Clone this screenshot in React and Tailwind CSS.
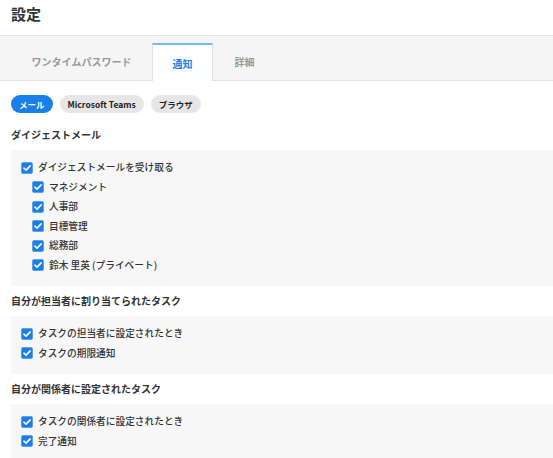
import React, { useState } from "react";

const font = { fontFamily: '"Noto Sans CJK JP", "Noto Sans", sans-serif' };

const Check = ({ checked, onChange }) => (
  <button
    onClick={onChange}
    className={`flex items-center justify-center w-[12px] h-[12px] rounded-[2px] border shrink-0 ${
      checked ? "bg-[#1a7fe6] border-[#5aa2ee]" : "bg-white border-[#999]"
    }`}
  >
    {checked && (
      <svg viewBox="0 0 12 12" className="w-[10px] h-[10px]">
        <path d="M2.3 6.2 L4.9 8.6 L9.8 3.4" fill="none" stroke="white" strokeWidth="1.9" strokeLinecap="round" strokeLinejoin="round" />
      </svg>
    )}
  </button>
);

const Row = ({ label, indent, checked, onToggle }) => (
  <div className={`flex items-center h-[19.5px] gap-[5px] ${indent ? "pl-[11px]" : ""}`}>
    <Check checked={checked} onChange={onToggle} />
    <span className="text-[9.7px] font-medium text-[#333]">{label}</span>
  </div>
);

const Section = ({ title, first, children }) => (
  <div>
    <h4 className={`text-[10px] font-bold text-[#333] leading-[14px] mb-[8px] ${first ? "mt-[15px]" : "mt-[8px]"}`}>
      {title}
    </h4>
    <div className="bg-[#f7f7f7] -mr-[11px] pl-[10px] pt-[8px] pb-[11px]">{children}</div>
  </div>
);

const App = () => {
  const [tab, setTab] = useState("通知");
  const [channel, setChannel] = useState("メール");
  const [checks, setChecks] = useState({});
  const toggle = (k) => setChecks((p) => ({ ...p, [k]: p[k] === false }));
  const on = (k) => checks[k] !== false;

  const tabs = [
    { name: "ワンタイムパスワード", w: "w-[141px]" },
    { name: "通知", w: "w-[61px]" },
    { name: "詳細", w: "w-[63px]" },
  ];
  const channels = ["メール", "Microsoft Teams", "ブラウザ"];
  const digest = ["マネジメント", "人事部", "目標管理", "総務部", "鈴木 里英 (プライベート)"];

  return (
    <div className="min-h-screen bg-white" style={font}>
      <div className="h-[35px] px-[11px] pt-[3px]">
        <h2 className="text-[15px] font-bold text-[#333] leading-[22px]">設定</h2>
      </div>

      <div className="flex items-end h-[46px] bg-[#f5f5f5] border-y border-[#e2e2e2] pl-[11px]">
        {tabs.map((t) =>
          t.name === tab ? (
            <button
              key={t.name}
              onClick={() => setTab(t.name)}
              className={`${t.w} h-[38px] -mb-px bg-white border-t-2 border-t-[#7ab8f2] border-x border-x-[#e2e2e2] text-[10px] font-bold text-[#1a7fe6]`}
            >
              {t.name}
            </button>
          ) : (
            <button
              key={t.name}
              onClick={() => setTab(t.name)}
              className={`${t.w} h-[38px] text-[10px] font-bold text-[#999]`}
            >
              {t.name}
            </button>
          )
        )}
      </div>

      <div className="px-[11px]">
        <div className="flex gap-[7px] mt-[14px]">
          {channels.map((c) => (
            <button
              key={c}
              onClick={() => setChannel(c)}
              className={`h-[18px] px-[8px] rounded-full text-[8.5px] font-bold ${
                c === channel ? "bg-[#1a7fe6] text-white" : "bg-[#e6e6e6] text-[#222]"
              }`}
            >
              {c}
            </button>
          ))}
        </div>

        <Section title="ダイジェストメール" first>
          <Row label="ダイジェストメールを受け取る" checked={on("d")} onToggle={() => toggle("d")} />
          {digest.map((d) => (
            <Row key={d} label={d} indent checked={on(d)} onToggle={() => toggle(d)} />
          ))}
        </Section>

        <Section title="自分が担当者に割り当てられたタスク">
          <Row label="タスクの担当者に設定されたとき" checked={on("a1")} onToggle={() => toggle("a1")} />
          <Row label="タスクの期限通知" checked={on("a2")} onToggle={() => toggle("a2")} />
        </Section>

        <Section title="自分が関係者に設定されたタスク">
          <Row label="タスクの関係者に設定されたとき" checked={on("r1")} onToggle={() => toggle("r1")} />
          <Row label="完了通知" checked={on("r2")} onToggle={() => toggle("r2")} />
        </Section>
      </div>
    </div>
  );
};

export default App;
